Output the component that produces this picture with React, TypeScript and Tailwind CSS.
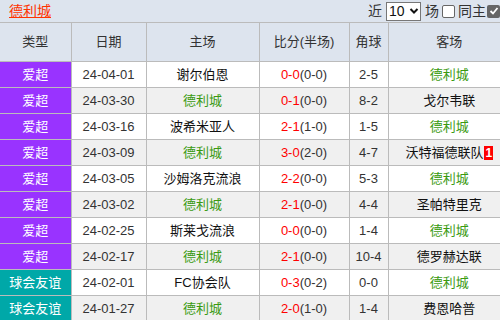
const rows = [
  { type: "爱超", date: "24-04-01", home: "谢尔伯恩", score: "0-0", half: "(0-0)", corner: "2-5", away: "德利城" },
  { type: "爱超", date: "24-03-30", home: "德利城", score: "0-1", half: "(0-0)", corner: "8-2", away: "戈尔韦联" },
  { type: "爱超", date: "24-03-16", home: "波希米亚人", score: "2-1", half: "(1-0)", corner: "1-5", away: "德利城" },
  { type: "爱超", date: "24-03-09", home: "德利城", score: "3-0", half: "(2-0)", corner: "4-7", away: "沃特福德联队", red: "1" },
  { type: "爱超", date: "24-03-05", home: "沙姆洛克流浪", score: "2-2", half: "(0-0)", corner: "5-3", away: "德利城" },
  { type: "爱超", date: "24-03-02", home: "德利城", score: "2-1", half: "(0-0)", corner: "4-4", away: "圣帕特里克" },
  { type: "爱超", date: "24-02-25", home: "斯莱戈流浪", score: "0-0", half: "(0-0)", corner: "1-4", away: "德利城" },
  { type: "爱超", date: "24-02-17", home: "德利城", score: "2-1", half: "(0-0)", corner: "10-4", away: "德罗赫达联" },
  { type: "球会友谊", date: "24-02-01", home: "FC协会队", score: "0-3", half: "(0-2)", corner: "0-0", away: "德利城" },
  { type: "球会友谊", date: "24-01-27", home: "德利城", score: "2-0", half: "(1-0)", corner: "1-4", away: "费恩哈普" },
];

function Team({ name, red }: { name: string; red?: string }) {
  const mine = name === "德利城";
  return (
    <span className={mine ? "text-[#3a9a10]" : "text-[#111]"}>
      {name}
      {red && <span className="ml-px inline-block bg-[#ff0000] px-px text-[12px] font-bold leading-[14px] text-white">{red}</span>}
    </span>
  );
}

export default function App() {
  return (
    <div className="h-[320px] w-[500px] overflow-hidden bg-[#dde4ee] font-['Liberation_Sans','Noto_Sans_CJK_SC',sans-serif] text-[13px] text-[#333]">
      <div className="flex h-[22px] w-[500px] items-center justify-between pl-[9px]">
        <span className="text-[14px] text-[#ff3300] underline">德利城</span>
        <div className="flex items-center text-[14px] text-[#333]">
          <span>近</span>
          <div className="ml-[4px] flex h-[19px] w-[35px] items-center justify-between border border-[#777] bg-white pl-[2px] pr-[1px] text-[14px] text-[#111]">
            <span>10</span>
            <svg width="10" height="8" viewBox="0 0 10 8"><path d="M1.5 2 L5 5.5 L8.5 2" fill="none" stroke="#111" strokeWidth="2" /></svg>
          </div>
          <span className="ml-[4px]">场</span>
          <span className="ml-[3px] inline-block h-[13px] w-[13px] rounded-[2px] border border-[#666] bg-white" />
          <span className="ml-[3px]">同主</span>
          <span className="ml-[1px] flex h-[13px] w-[13px] items-center justify-center rounded-[2px] bg-[#666]">
            <svg width="10" height="10" viewBox="0 0 10 10"><path d="M1.5 5 L4 7.5 L8.5 2" fill="none" stroke="#fff" strokeWidth="1.8" /></svg>
          </span>
        </div>
      </div>
      <table className="w-[511px] table-fixed border-collapse">
        <colgroup>
          <col className="w-[71px]" />
          <col className="w-[75px]" />
          <col className="w-[113px]" />
          <col className="w-[90px]" />
          <col className="w-[39px]" />
          <col />
        </colgroup>
        <thead>
          <tr className="h-[39px] border-t border-[#bbb] text-[#333]">
            {["类型", "日期", "主场", "比分(半场)", "角球", "客场"].map((h) => (
              <th key={h} className="border-x border-[#bbb] text-center font-normal first:border-l-0">{h}</th>
            ))}
          </tr>
        </thead>
        <tbody>
          {rows.map((r, i) => (
            <tr key={i} className={`h-[26px] ${i % 2 ? "bg-[#f0f0f0]" : "bg-white"}`}>
              <td className={`border border-l-0 border-[#bbb] text-center text-white ${r.type === "爱超" ? "bg-[#9933ff]" : "bg-[#00a8a8]"}`}>{r.type}</td>
              <td className="border border-[#bbb] text-center">{r.date}</td>
              <td className="border border-[#bbb] text-center"><Team name={r.home} /></td>
              <td className="border border-[#bbb] text-center">
                <span className="text-[#ff0000]">{r.score}</span>
                {r.half}
              </td>
              <td className="border border-[#bbb] text-center">{r.corner}</td>
              <td className="border border-[#bbb] text-center"><Team name={r.away} red={r.red} /></td>
            </tr>
          ))}
        </tbody>
      </table>
    </div>
  );
}
